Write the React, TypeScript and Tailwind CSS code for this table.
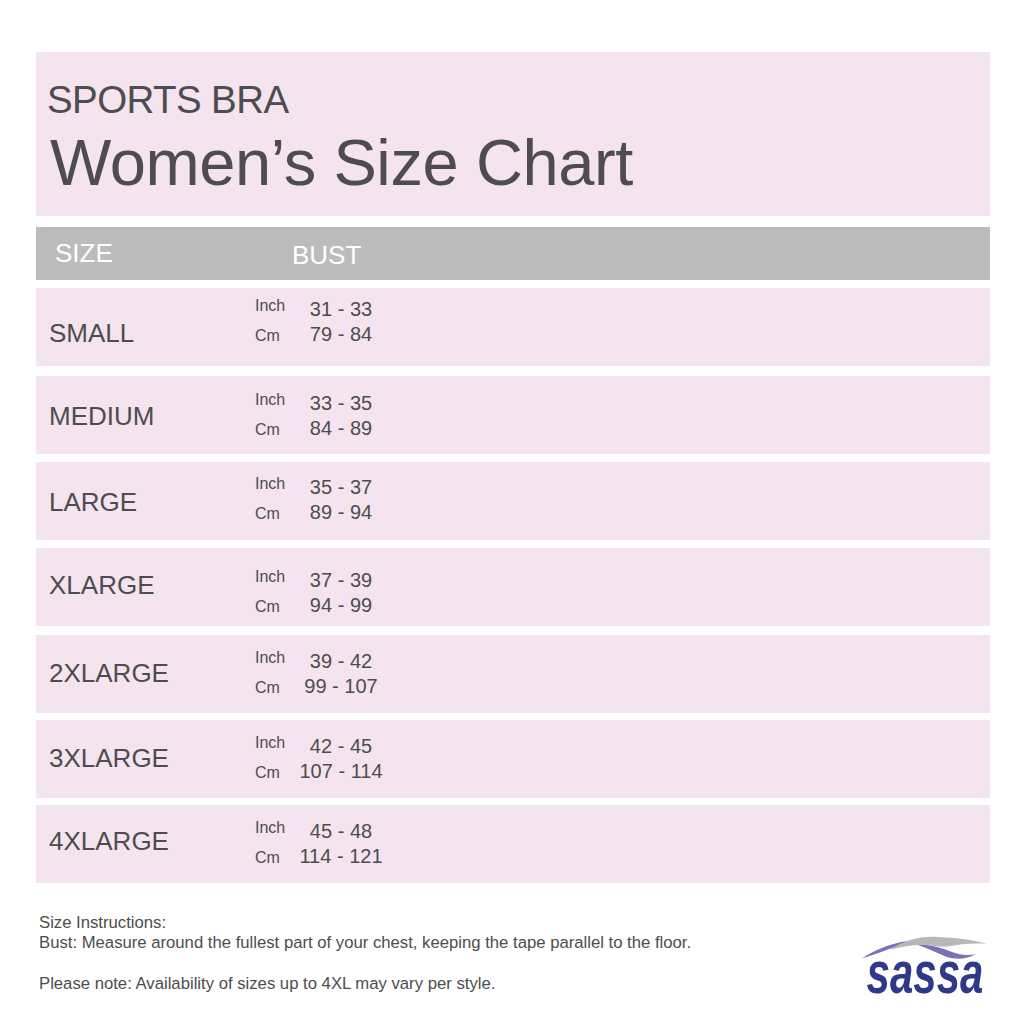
import React from "react";

type Row = {
  size: string;
  inch: string;
  cm: string;
  mt: string;
  lt: string;
  vt: string;
};

const rows: Row[] = [
  { size: "SMALL", inch: "31 - 33", cm: "79 - 84", mt: "mt-0", lt: "pt-[32px]", vt: "pt-[9px]" },
  { size: "MEDIUM", inch: "33 - 35", cm: "84 - 89", mt: "mt-[10px]", lt: "pt-[27px]", vt: "pt-[15px]" },
  { size: "LARGE", inch: "35 - 37", cm: "89 - 94", mt: "mt-[8px]", lt: "pt-[27px]", vt: "pt-[13px]" },
  { size: "XLARGE", inch: "37 - 39", cm: "94 - 99", mt: "mt-[8px]", lt: "pt-[24px]", vt: "pt-[20px]" },
  { size: "2XLARGE", inch: "39 - 42", cm: "99 - 107", mt: "mt-[9px]", lt: "pt-[25px]", vt: "pt-[14px]" },
  { size: "3XLARGE", inch: "42 - 45", cm: "107 - 114", mt: "mt-[7px]", lt: "pt-[25px]", vt: "pt-[14px]" },
  { size: "4XLARGE", inch: "45 - 48", cm: "114 - 121", mt: "mt-[7px]", lt: "pt-[23px]", vt: "pt-[14px]" },
];

function Logo() {
  return (
    <div className="mt-[20px] flex w-[130px] flex-col">
      <svg width="130" height="30" viewBox="0 0 130 30" className="block">
        <path
          d="M2 25 C14 18, 28 11, 47 8 C42 12, 32 15, 24 18 C15 21, 8 24, 2 25 Z"
          fill="#7a72b6"
        />
        <path
          d="M54 11 C70 11, 82 15, 92 19 C100 22, 108 23, 116 21 C108 26, 96 27, 87 24 C77 20, 66 14, 54 11 Z"
          fill="#7a72b6"
        />
        <path
          d="M30 17 C45 7, 60 3, 78 4 C95 5, 110 6, 127 11 C113 10, 101 11, 91 13 C81 15, 72 12, 62 12 C50 12, 40 14, 30 17 Z"
          fill="#b7b7ba"
        />
      </svg>
      <div className="-mt-[11px] scale-y-[1.42] text-center text-[42px] font-bold italic leading-none text-[#2e3a87]">
        sassa
      </div>
    </div>
  );
}

export default function App() {
  return (
    <div className="h-[1024px] w-[1024px] overflow-hidden bg-white pl-[36px] pr-[34px] pt-[52px] font-['Liberation_Sans',Arial,sans-serif] text-[#4d4d4f]">
      <div className="h-[164px] bg-[#f3e4ef] pl-[11px] pt-[29px]">
        <div className="text-[38.5px] leading-none tracking-[-0.6px]">SPORTS BRA</div>
        <div className="ml-[3px] mt-[10.5px] text-[65px] leading-none tracking-[-0.4px]">
          Women’s Size Chart
        </div>
      </div>

      <div className="mt-[11px] flex h-[53px] items-start bg-[#bcbcbc] pl-[19px] text-[26px] leading-none text-white">
        <div className="w-[237px] pt-[13px]">SIZE</div>
        <div className="pt-[15px]">BUST</div>
      </div>

      <div className="mt-[8px] flex flex-col">
        {rows.map((r) => (
          <div key={r.size} className={`${r.mt} flex h-[78px] bg-[#f3e4ef]`}>
            <div className={`w-[219px] shrink-0 pl-[13px] ${r.lt} text-[26px] leading-none`}>{r.size}</div>
            <div className={`flex ${r.vt}`}>
              <div className="flex w-[36px] shrink-0 flex-col text-[16px]">
                <div className="leading-[18px]">Inch</div>
                <div className="mt-[12px] leading-[18px]">Cm</div>
              </div>
              <div className="w-[100px] shrink-0 whitespace-nowrap text-center text-[20px] leading-[25px]">
                <div>{r.inch}</div>
                <div>{r.cm}</div>
              </div>
            </div>
          </div>
        ))}
      </div>

      <div className="mt-[30px] flex items-start justify-between pl-[3px]">
        <div className="text-[16.7px] leading-[20px] text-[#4d4d4d]">
          <div>Size Instructions:</div>
          <div>Bust: Measure around the fullest part of your chest, keeping the tape parallel to the floor.</div>
          <div className="mt-[21px]">Please note: Availability of sizes up to 4XL may vary per style.</div>
        </div>
        <Logo />
      </div>
    </div>
  );
}
